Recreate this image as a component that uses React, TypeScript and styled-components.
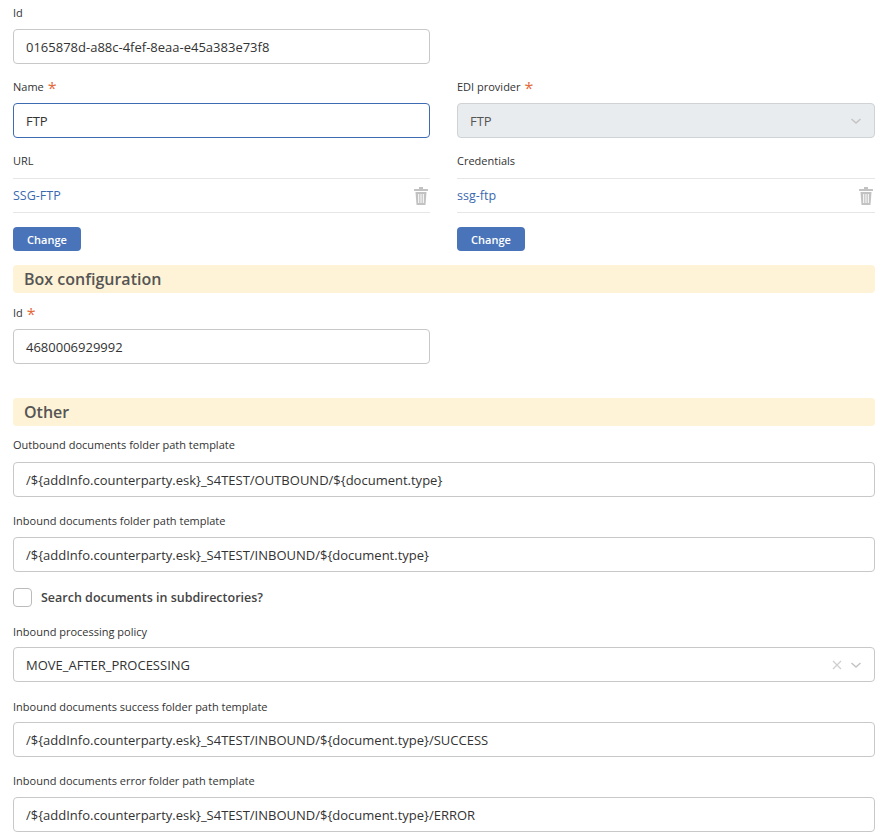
import React from "react";
import styled, { createGlobalStyle } from "styled-components";

const Global = createGlobalStyle`
  body { margin: 0; background: #fff; font-family: "Open Sans", "DejaVu Sans", sans-serif; color: #333; }
`;

const Page = styled.div`
  padding: 5px 9px 0 13px;
  display: flex;
  flex-direction: column;
`;

const Row = styled.div`
  display: grid;
  grid-template-columns: 417px 418px;
  column-gap: 27px;
`;

const Field = styled.div<{ $mb?: number }>`
  display: flex;
  flex-direction: column;
  margin-bottom: ${({ $mb }) => $mb ?? 16}px;
`;

const Label = styled.div<{ $mb?: number }>`
  font-size: 11px;
  color: #333;
  height: 16px;
  line-height: 16px;
  margin-bottom: ${({ $mb }) => $mb ?? 8}px;
  display: flex;
  align-items: center;
  gap: 4px;
`;

const Star = styled.span`
  color: #e46a3c;
  font-size: 16px;
  line-height: 10px;
  margin-top: 2px;
`;

const Input = styled.div<{ $focus?: boolean; $disabled?: boolean }>`
  height: 35px;
  box-sizing: border-box;
  border: 1px solid ${({ $focus, $disabled }) => ($focus ? "#3f6bb5" : $disabled ? "#cfd3d6" : "#c8c8c8")};
  border-radius: 4px;
  background: ${({ $disabled }) => ($disabled ? "#e9ecef" : "#fff")};
  color: ${({ $disabled }) => ($disabled ? "#555" : "#333")};
  padding: 0 12px;
  display: flex;
  align-items: center;
  font-size: 13px;
  justify-content: space-between;
`;

const LinkRow = styled.div`
  height: 35px;
  box-sizing: border-box;
  border-top: 1px solid #e6e6e6;
  border-bottom: 1px solid #e6e6e6;
  display: flex;
  align-items: center;
  justify-content: space-between;
  font-size: 12.5px;
  color: #3a69b0;
  padding-right: 2px;
`;

const Button = styled.button`
  margin-top: 14px;
  width: 68px;
  height: 24px;
  border: none;
  border-radius: 4px;
  background: #4a74b9;
  color: #fff;
  font-family: inherit;
  font-weight: 600;
  font-size: 11px;
  padding: 0;
`;

const Section = styled.div<{ $mt: number; $mb: number }>`
  margin-top: ${({ $mt }) => $mt}px;
  margin-bottom: ${({ $mb }) => $mb}px;
  height: 28px;
  background: #fef3d6;
  border-radius: 4px;
  padding-left: 11px;
  display: flex;
  align-items: center;
  font-size: 16px;
  font-weight: 600;
  color: #555;
`;

const Check = styled.label`
  display: flex;
  align-items: center;
  gap: 9px;
  height: 19px;
  font-size: 12.5px;
  font-weight: 600;
  color: #444;
  margin: 0 0 17px;
`;

const Box = styled.span`
  width: 17px;
  height: 17px;
  border: 1px solid #bbb;
  border-radius: 4px;
`;

const Icons = styled.span`
  display: flex;
  align-items: center;
  gap: 8px;
`;

const Trash = () => (
  <svg width="14" height="18" viewBox="0 0 14 18" fill="#c2c2c2">
    <rect x="0" y="2" width="14" height="2" rx="0.5" />
    <rect x="5" y="0" width="4" height="2" />
    <path d="M1.5 5h11l-1 13h-9z" />
    <rect x="4.2" y="7" width="1" height="9" fill="#fff" />
    <rect x="6.5" y="7" width="1" height="9" fill="#fff" />
    <rect x="8.8" y="7" width="1" height="9" fill="#fff" />
  </svg>
);

const Chevron = () => (
  <svg width="12" height="8" viewBox="0 0 12 8" fill="none" stroke="#c4c4c4" strokeWidth="1.5">
    <path d="M1.5 2l4.5 4 4.5-4" />
  </svg>
);

const Cross = () => (
  <svg width="10" height="10" viewBox="0 0 10 10" stroke="#cfcfcf" strokeWidth="1.3">
    <path d="M1 1l8 8M9 1l-8 8" />
  </svg>
);

const Full = styled.div`
  width: 862px;
`;

const o = "{";
const c = "}";

export default function App() {
  return (
    <Page>
      <Global />
      <Row>
        <Field $mb={15}>
          <Label>Id</Label>
          <Input>0165878d-a88c-4fef-8eaa-e45a383e73f8</Input>
        </Field>
        <div />
        <Field $mb={15}>
          <Label>Name <Star>*</Star></Label>
          <Input $focus>FTP</Input>
        </Field>
        <Field $mb={15}>
          <Label>EDI provider <Star>*</Star></Label>
          <Input $disabled>FTP<Chevron /></Input>
        </Field>
        <Field $mb={0}>
          <Label $mb={9}>URL</Label>
          <LinkRow>SSG-FTP<Trash /></LinkRow>
          <Button>Change</Button>
        </Field>
        <Field $mb={0}>
          <Label $mb={9}>Credentials</Label>
          <LinkRow>ssg-ftp<Trash /></LinkRow>
          <Button>Change</Button>
        </Field>
      </Row>
      <Section $mt={14} $mb={12}>Box configuration</Section>
      <Row>
        <Field $mb={0}>
          <Label>Id <Star>*</Star></Label>
          <Input>4680006929992</Input>
        </Field>
      </Row>
      <Section $mt={34} $mb={11}>Other</Section>
      <Full>
        <Field>
          <Label $mb={9}>Outbound documents folder path template</Label>
          <Input>/${o}addInfo.counterparty.esk{c}_S4TEST/OUTBOUND/${o}document.type{c}</Input>
        </Field>
        <Field $mb={16}>
          <Label>Inbound documents folder path template</Label>
          <Input>/${o}addInfo.counterparty.esk{c}_S4TEST/INBOUND/${o}document.type{c}</Input>
        </Field>
        <Check><Box />Search documents in subdirectories?</Check>
        <Field $mb={17}>
          <Label $mb={7}>Inbound processing policy</Label>
          <Input>MOVE_AFTER_PROCESSING<Icons><Cross /><Chevron /></Icons></Input>
        </Field>
        <Field $mb={16}>
          <Label $mb={7}>Inbound documents success folder path template</Label>
          <Input>/${o}addInfo.counterparty.esk{c}_S4TEST/INBOUND/${o}document.type{c}/SUCCESS</Input>
        </Field>
        <Field $mb={0}>
          <Label>Inbound documents error folder path template</Label>
          <Input>/${o}addInfo.counterparty.esk{c}_S4TEST/INBOUND/${o}document.type{c}/ERROR</Input>
        </Field>
      </Full>
    </Page>
  );
}
